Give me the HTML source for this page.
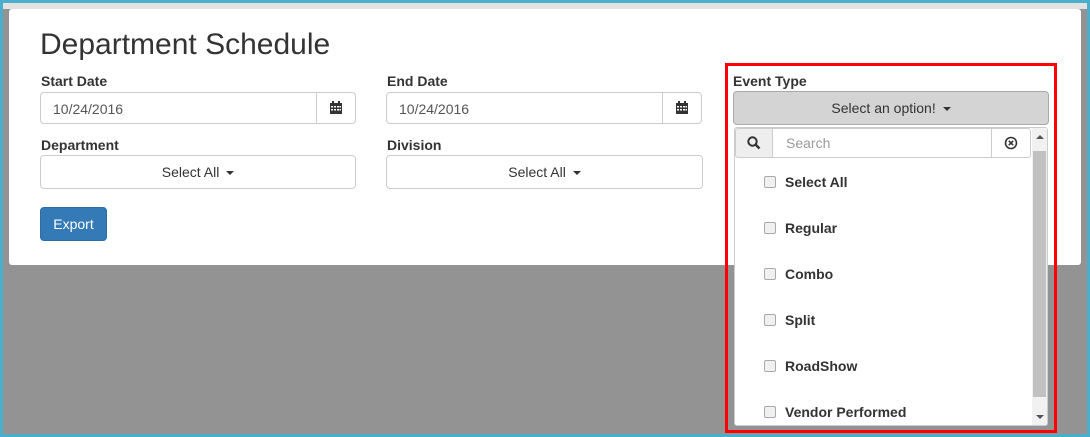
<!DOCTYPE html><html><head><style>
body{margin:0;width:1090px;height:437px;overflow:hidden;font-family:"Liberation Sans",sans-serif;color:#333;position:relative;background:#4bafcb}
.in{position:absolute;left:3px;top:3px;width:1084px;height:431px;background:#939393}
.top{position:absolute;left:3px;top:3px;width:1084px;height:6px;background:#e2e2e2}
.card{position:absolute;left:9px;top:9px;width:1072px;height:256px;background:#fff;border-radius:3px}
.a{position:absolute}
h1{position:absolute;left:40px;top:28px;margin:0;font-size:30px;font-weight:normal;color:#333}
.lbl{position:absolute;font-size:14px;font-weight:bold}
.inp{position:absolute;height:32px;border:1px solid #ccc;border-radius:4px;box-sizing:border-box;font-size:14px;color:#555;background:#fff}
.btn{position:absolute;height:34px;border:1px solid #ccc;border-radius:4px;box-sizing:border-box;font-size:14px;text-align:center;line-height:32px;background:#fff}
.caret{display:inline-block;border-top:4px solid #333;border-left:4px solid transparent;border-right:4px solid transparent;vertical-align:middle;margin-left:3px}
.cal{position:absolute;right:0;top:0;width:38px;height:30px;border-left:1px solid #ccc;background:#fff;border-radius:0 4px 4px 0}
.it{position:absolute;left:764px;font-size:14px;font-weight:bold;color:#333}
.it:before{content:"";display:inline-block;width:10px;height:10px;border:1px solid #aaa;border-radius:2px;background:#f0f0f0;margin-right:9px;vertical-align:-1px}
</style></head><body>
<div class="in"></div><div class="top"></div>
<div class="card"></div>
<h1>Department Schedule</h1>
<div class="lbl" style="left:41px;top:73px">Start Date</div>
<div class="inp" style="left:40px;top:92px;width:316px;padding:8px 12px">10/24/2016<div class="cal"><svg style="position:absolute;left:13px;top:8px" width="12" height="13" viewBox="0 0 12 13"><rect x="0" y="2" width="12" height="11" fill="#333"/><rect x="2" y="0" width="2" height="3" fill="#333"/><rect x="8" y="0" width="2" height="3" fill="#333"/><g fill="#fff"><rect x="1" y="5" width="2" height="1.5"/><rect x="4" y="5" width="2" height="1.5"/><rect x="7" y="5" width="2" height="1.5"/><rect x="1" y="8" width="2" height="1.5"/><rect x="4" y="8" width="2" height="1.5"/><rect x="7" y="8" width="2" height="1.5"/><rect x="9.5" y="5" width="1.5" height="1.5"/><rect x="9.5" y="8" width="1.5" height="1.5"/></g></svg></div></div>
<div class="lbl" style="left:387px;top:73px">End Date</div>
<div class="inp" style="left:386px;top:92px;width:316px;padding:8px 12px">10/24/2016<div class="cal"><svg style="position:absolute;left:13px;top:8px" width="12" height="13" viewBox="0 0 12 13"><rect x="0" y="2" width="12" height="11" fill="#333"/><rect x="2" y="0" width="2" height="3" fill="#333"/><rect x="8" y="0" width="2" height="3" fill="#333"/><g fill="#fff"><rect x="1" y="5" width="2" height="1.5"/><rect x="4" y="5" width="2" height="1.5"/><rect x="7" y="5" width="2" height="1.5"/><rect x="1" y="8" width="2" height="1.5"/><rect x="4" y="8" width="2" height="1.5"/><rect x="7" y="8" width="2" height="1.5"/><rect x="9.5" y="5" width="1.5" height="1.5"/><rect x="9.5" y="8" width="1.5" height="1.5"/></g></svg></div></div>
<div class="lbl" style="left:41px;top:137px">Department</div>
<div class="btn" style="left:40px;top:155px;width:316px">Select All <span class="caret"></span></div>
<div class="lbl" style="left:387px;top:137px">Division</div>
<div class="btn" style="left:386px;top:155px;width:317px">Select All <span class="caret"></span></div>
<div class="btn" style="left:40px;top:207px;width:67px;background:#337ab7;border-color:#2e6da4;color:#fff">Export</div>
<div class="lbl" style="left:733px;top:73px">Event Type</div>
<div class="btn" style="left:733px;top:91px;width:316px;background:#d4d4d4;border-color:#aaa">Select an option! <span class="caret"></span></div>
<div class="a" style="left:734px;top:127px;width:314px;height:299px;background:#fff;border:1px solid #ccc;box-sizing:border-box;border-radius:3px"></div>
<div class="a" style="left:735px;top:128px;width:38px;height:30px;background:#eee;border:1px solid #ccc;box-sizing:border-box;border-radius:3px 0 0 3px"><svg style="position:absolute;left:11px;top:7px" width="14" height="14"><circle cx="5.5" cy="5.5" r="4.2" fill="none" stroke="#333" stroke-width="2"/><line x1="8.5" y1="8.5" x2="12.5" y2="12.5" stroke="#333" stroke-width="2.5"/></svg></div>
<div class="a" style="left:772px;top:128px;width:220px;height:30px;border:1px solid #ccc;box-sizing:border-box;font-size:14px;color:#999;padding:6px 13px">Search</div>
<div class="a" style="left:991px;top:128px;width:40px;height:30px;border:1px solid #ccc;box-sizing:border-box;border-radius:0 3px 3px 0"><svg style="position:absolute;left:12px;top:7px" width="14" height="14"><circle cx="7" cy="7" r="5.5" fill="none" stroke="#333" stroke-width="1.6"/><path d="M4.8 4.8L9.2 9.2M9.2 4.8L4.8 9.2" stroke="#333" stroke-width="1.6"/></svg></div>
<div class="a" style="left:1032px;top:128px;width:15px;height:297px;background:#f1f1f1"></div>
<div class="a" style="left:1033px;top:151px;width:13px;height:246px;background:#c1c1c1"></div>
<div class="a" style="left:1036px;top:135px;border-bottom:4px solid #555;border-left:4px solid transparent;border-right:4px solid transparent"></div>
<div class="a" style="left:1036px;top:415px;border-top:4px solid #555;border-left:4px solid transparent;border-right:4px solid transparent"></div>
<div class="it" style="top:174px">Select All</div>
<div class="it" style="top:220px">Regular</div>
<div class="it" style="top:266px">Combo</div>
<div class="it" style="top:312px">Split</div>
<div class="it" style="top:358px">RoadShow</div>
<div class="it" style="top:404px">Vendor Performed</div>
<div class="a" style="left:725px;top:63px;width:332px;height:370px;border:3px solid #f00;box-sizing:border-box"></div>
</body></html>
